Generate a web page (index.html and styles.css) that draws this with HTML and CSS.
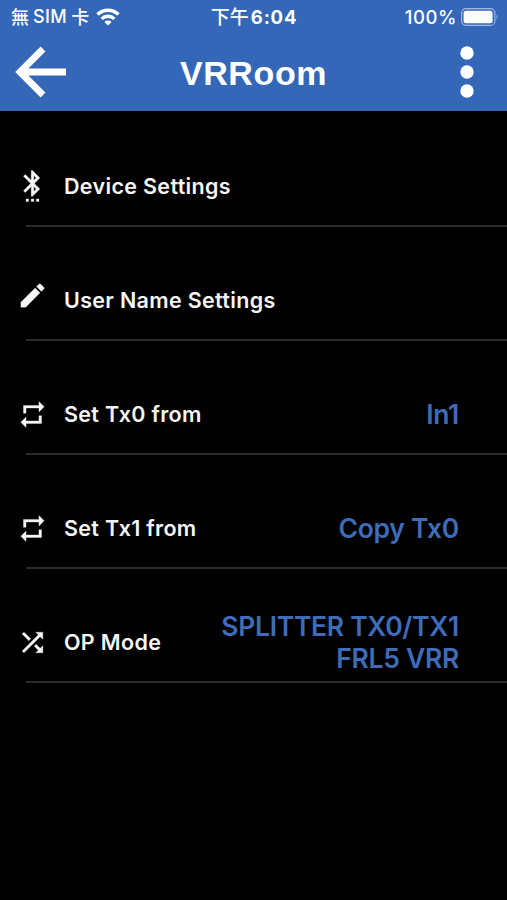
FILE: index.html
```html
<!DOCTYPE html>
<html lang="zh-Hant">
<head>
  <meta charset="UTF-8">
  <meta name="viewport" content="width=device-width, initial-scale=1.0">
  <title>VRRoom</title>
  <link rel="stylesheet" href="styles.css">
</head>
<body>
  <header class="header">
    <div class="status-bar">
      <div class="carrier">
        <span class="cjk">無</span><span class="sim">SIM</span><span class="cjk">卡</span>
        <svg class="wifi" viewBox="0 0 24 18" fill="none" stroke="#fff" stroke-width="3.4">
          <path d="M1.5 6.5a15 15 0 0 1 21 0"/>
          <path d="M5.6 10.9a9.2 9.2 0 0 1 12.8 0"/>
          <path d="M12 17.6l-3.6-3.7a5.2 5.2 0 0 1 7.2 0z" fill="#fff" stroke="none"/>
        </svg>
      </div>
      <div class="clock"><span class="cjk">下午</span><b>6:04</b></div>
      <div class="power">
        <span class="percent">100%</span>
        <svg class="battery" viewBox="0 0 38 18">
          <rect x=".6" y=".6" width="33.3" height="16.8" rx="4.5" fill="none" stroke="#a3bae3" stroke-width="1.1"/>
          <rect x="2.6" y="2.8" width="29" height="12.4" rx="2.5" fill="#fff"/>
          <path d="M35.6 6.2q2 2.8 0 5.6z" fill="#a3bae3"/>
        </svg>
      </div>
    </div>
    <nav class="nav-bar">
      <svg class="back" viewBox="0 0 52 52" fill="none" stroke="#fff" stroke-width="6.8">
        <path d="M28 3L5 26l23 23M4 26h47"/>
      </svg>
      <h1 class="title">VRRoom</h1>
      <svg class="more" viewBox="0 0 14 52" fill="#fff">
        <circle cx="7" cy="7" r="6.7"/>
        <circle cx="7" cy="26" r="6.7"/>
        <circle cx="7" cy="45" r="6.7"/>
      </svg>
    </nav>
  </header>

  <main class="settings">
    <div class="row">
      <svg class="icon bluetooth" viewBox="0 0 24 24"><path d="M11 24h2v-2h-2v2zm-4 0h2v-2H7v2zm8 0h2v-2h-2v2zm2.71-18.29L12 0h-1v7.59L6.41 3 5 4.41 10.59 10 5 15.59 6.41 17 11 12.41V20h1l5.71-5.71-4.3-4.29 4.3-4.29zM13 3.83l1.88 1.88L13 7.59V3.83zm1.88 10.46L13 16.17v-3.76l1.88 1.88z"/></svg>
      <span class="label">Device Settings</span>
    </div>
    <div class="row">
      <svg class="icon edit" viewBox="0 0 24 24"><path d="M3 17.25V21h3.75L17.81 9.94l-3.75-3.75L3 17.25zM20.71 7.04a1 1 0 0 0 0-1.41l-2.34-2.34a1 1 0 0 0-1.41 0l-1.83 1.83 3.75 3.75 1.83-1.83z"/></svg>
      <span class="label">User Name Settings</span>
    </div>
    <div class="row">
      <svg class="icon" viewBox="0 0 24 24"><path d="M7 7h10v3l4-4-4-4v3H5v6h2V7zm10 10H7v-3l-4 4 4 4v-3h12v-6h-2v4z"/></svg>
      <span class="label">Set Tx0 from</span>
      <span class="value">In1</span>
    </div>
    <div class="row">
      <svg class="icon" viewBox="0 0 24 24"><path d="M7 7h10v3l4-4-4-4v3H5v6h2V7zm10 10H7v-3l-4 4 4 4v-3h12v-6h-2v4z"/></svg>
      <span class="label">Set Tx1 from</span>
      <span class="value">Copy Tx0</span>
    </div>
    <div class="row">
      <svg class="icon" viewBox="0 0 24 24"><path d="M10.59 9.17L5.41 4 4 5.41l5.17 5.17 1.42-1.41zM14.5 4l2.04 2.04L4 18.59 5.41 20 17.96 7.46 20 9.5V4h-5.5zm.33 9.41l-1.41 1.41 3.13 3.13L14.5 20H20v-5.5l-2.04 2.04-3.13-3.13z"/></svg>
      <span class="label">OP Mode</span>
      <span class="value">SPLITTER TX0/TX1<br>FRL5 VRR</span>
    </div>
  </main>
</body>
</html>
```

FILE: styles.css
```css
* {
  box-sizing: border-box;
}
body {
  margin: 0;
  min-height: 100vh;
  background: #000;
  color: #f6f6f6;
  font-family: Inter, "Noto Sans CJK TC", sans-serif;
}
svg {
  display: block;
  flex: none;
}
/* Blue header with the phone status bar and the nav bar */
.header {
  height: 111px;
  background: #3567b9;
  color: #fff;
}
.status-bar {
  height: 34px;
  padding: 0 8px 0 11px;
  display: grid;
  grid-template-columns: 1fr auto 1fr;
  align-items: center;
  font-size: 18.5px;
  line-height: 34px;
}
.carrier,
.clock,
.power {
  display: flex;
  align-items: center;
  white-space: nowrap;
}
.cjk {
  margin-top: -2px;
  font-family: "Noto Sans CJK TC", sans-serif;
  font-weight: 500;
  font-size: 18px;
}
.clock .cjk {
  font-size: 19px;
}
.sim {
  margin: 0 4px 0 4px;
  font-size: 18px;
  font-weight: 500;
  letter-spacing: 0.4px;
}
.wifi {
  width: 24px;
  height: 18px;
  margin-left: 7px;
}
.clock {
  margin-left: -2px;
}
.clock b {
  margin-left: 2px;
  font-weight: 700;
  letter-spacing: 0.8px;
}
.power {
  justify-content: flex-end;
}
.percent {
  margin-right: 4px;
  font-weight: 500;
  letter-spacing: 0.6px;
}
.battery {
  width: 38px;
  height: 18px;
}
.nav-bar {
  height: 76px;
  padding: 0 33px 0 15px;
  display: grid;
  grid-template-columns: 52px 1fr 14px;
  align-items: center;
}
.back {
  width: 52px;
  height: 52px;
}
.title {
  margin: 2px 0 0;
  padding-right: 20px;
  text-align: center;
  font-family: "Liberation Sans", Arial, sans-serif;
  font-size: 34px;
  font-weight: 700;
  letter-spacing: 0.6px;
}
.more {
  width: 14px;
  height: 52px;
}
/* Settings list */
.settings {
  padding-top: 2px;
}
.row {
  height: 114px;
  padding: 32px 48px 0 17px;
  display: flex;
  align-items: center;
  background: linear-gradient(#2b2b2b, #2b2b2b) 26px 100% / 100% 2px no-repeat;
}
.icon {
  width: 31px;
  height: 31px;
  fill: #f6f6f6;
  stroke: #f6f6f6;
  stroke-width: 0.25;
}
.bluetooth {
  height: 32px;
}
.edit {
  margin-bottom: 9px;
}
.label {
  flex: none;
  margin-left: 16px;
  font-size: 21.5px;
  font-weight: 600;
  letter-spacing: 0.33px;
}
.value {
  margin-left: auto;
  color: #3f6cb8;
  font-size: 26.5px;
  font-weight: 600;
  line-height: 32px;
  letter-spacing: -0.3px;
  text-align: right;
  white-space: nowrap;
}
```
